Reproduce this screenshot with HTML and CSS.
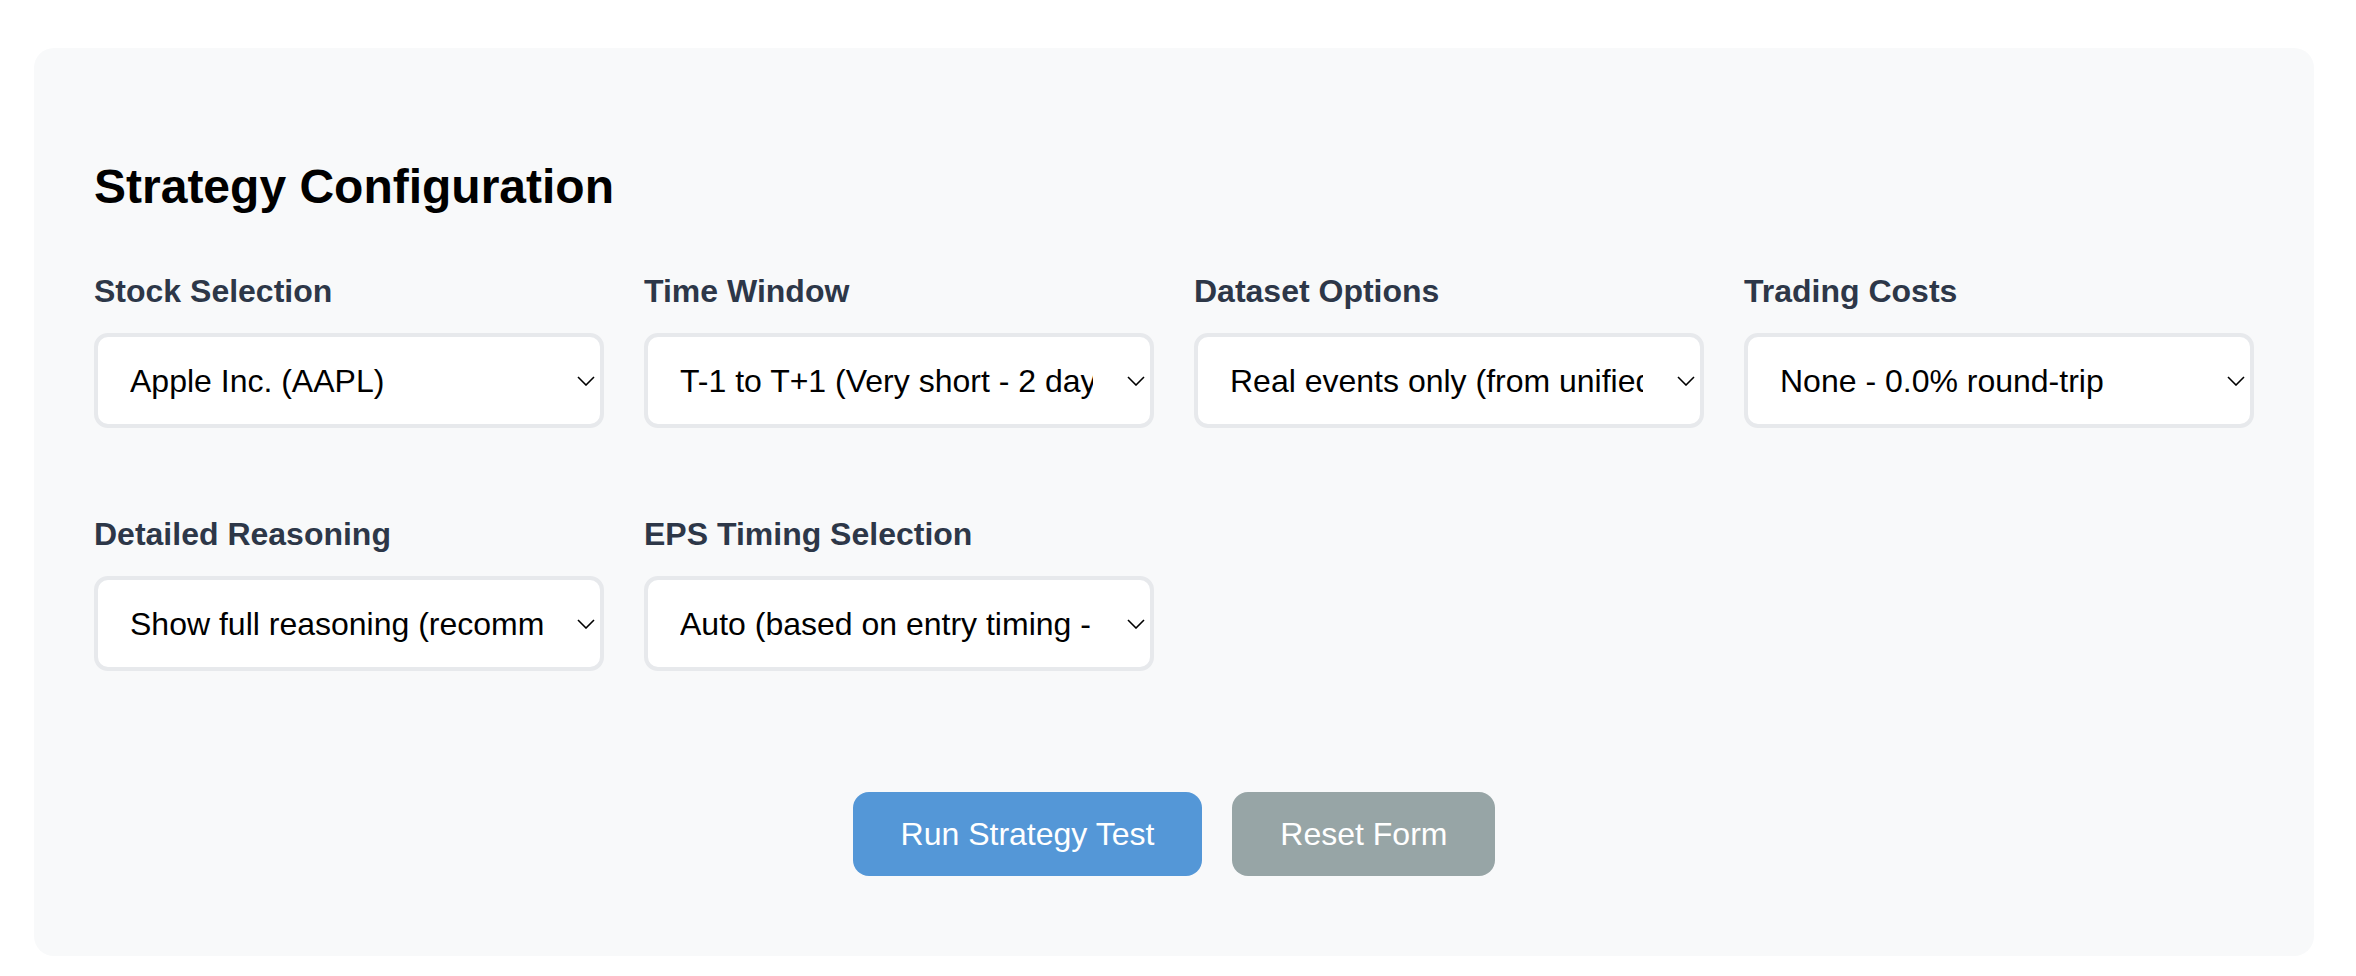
FILE: index.html
```html
<!DOCTYPE html>
<html lang="en">
<head>
<meta charset="utf-8">
<title>Strategy Configuration</title>
<link rel="stylesheet" href="styles.css">
</head>
<body>
<div class="page">
  <section class="card">
    <h2 class="title">Strategy Configuration</h2>
    <div class="grid">
      <div class="group">
        <label class="label">Stock Selection</label>
        <div class="select-wrap">
          <select class="select"><option>Apple Inc. (AAPL)</option></select>
          <svg class="chev" width="18" height="10" viewBox="0 0 18 10"><polyline points="1,1 9,9 17,1" fill="none" stroke="#000" stroke-width="1.6"/></svg>
        </div>
      </div>
      <div class="group">
        <label class="label">Time Window</label>
        <div class="select-wrap">
          <select class="select"><option>T-1 to T+1 (Very short - 2 days)</option></select>
          <svg class="chev" width="18" height="10" viewBox="0 0 18 10"><polyline points="1,1 9,9 17,1" fill="none" stroke="#000" stroke-width="1.6"/></svg>
        </div>
      </div>
      <div class="group">
        <label class="label">Dataset Options</label>
        <div class="select-wrap">
          <select class="select"><option>Real events only (from unified dataset)</option></select>
          <svg class="chev" width="18" height="10" viewBox="0 0 18 10"><polyline points="1,1 9,9 17,1" fill="none" stroke="#000" stroke-width="1.6"/></svg>
        </div>
      </div>
      <div class="group">
        <label class="label">Trading Costs</label>
        <div class="select-wrap">
          <select class="select"><option>None - 0.0% round-trip</option></select>
          <svg class="chev" width="18" height="10" viewBox="0 0 18 10"><polyline points="1,1 9,9 17,1" fill="none" stroke="#000" stroke-width="1.6"/></svg>
        </div>
      </div>
      <div class="group">
        <label class="label">Detailed Reasoning</label>
        <div class="select-wrap">
          <select class="select"><option>Show full reasoning (recommended)</option></select>
          <svg class="chev" width="18" height="10" viewBox="0 0 18 10"><polyline points="1,1 9,9 17,1" fill="none" stroke="#000" stroke-width="1.6"/></svg>
        </div>
      </div>
      <div class="group">
        <label class="label">EPS Timing Selection</label>
        <div class="select-wrap">
          <select class="select"><option>Auto (based on entry timing - T-1 uses prior quarter)</option></select>
          <svg class="chev" width="18" height="10" viewBox="0 0 18 10"><polyline points="1,1 9,9 17,1" fill="none" stroke="#000" stroke-width="1.6"/></svg>
        </div>
      </div>
    </div>
    <div class="actions">
      <button class="btn btn-primary" type="button">Run Strategy Test</button>
      <button class="btn btn-secondary" type="button">Reset Form</button>
    </div>
  </section>
</div>
</body>
</html>
```

FILE: styles.css
```css
html, body {
  margin: 0;
  padding: 0;
  background: #ffffff;
}

body {
  font-family: "Liberation Sans", Arial, Helvetica, sans-serif;
  color: #000;
}

.page {
  padding: 48px 42px 20px 34px;
}

.card {
  background: #f8f9fa;
  border-radius: 20px;
  padding: 60px 60px 80px 60px;
  box-sizing: border-box;
  width: 2280px;
}

.title {
  margin: 51px 0 58px 0;
  font-size: 48px;
  line-height: 56px;
  font-weight: 700;
  color: #000;
}

.grid {
  display: grid;
  grid-template-columns: repeat(4, 1fr);
  column-gap: 40px;
  row-gap: 88px;
}

.group {
  display: flex;
  flex-direction: column;
  min-width: 0;
}

.label {
  display: block;
  font-size: 32px;
  line-height: 37px;
  font-weight: 700;
  color: #2d3748;
  margin-bottom: 23px;
}

.select-wrap {
  position: relative;
}

.select {
  -webkit-appearance: none;
  appearance: none;
  display: block;
  width: 100%;
  height: 95px;
  box-sizing: border-box;
  border: 4px solid #e7e9ec;
  border-radius: 14px;
  background: #ffffff;
  padding: 0 57px 0 32px;
  font-family: "Liberation Sans", Arial, Helvetica, sans-serif;
  font-size: 32px;
  color: #000;
  outline: none;
}

.chev {
  position: absolute;
  right: 9px;
  top: 43px;
  pointer-events: none;
}

.actions {
  display: flex;
  justify-content: center;
  gap: 30px;
  margin-top: 121px;
}

.btn {
  border: none;
  border-radius: 16px;
  padding: 24px 48px;
  font-family: "Liberation Sans", Arial, Helvetica, sans-serif;
  font-size: 32px;
  line-height: 36px;
  color: #ffffff;
  cursor: pointer;
}

.btn-primary {
  background: #5497d7;
}

.btn-secondary {
  background: #97a5a6;
}
```
